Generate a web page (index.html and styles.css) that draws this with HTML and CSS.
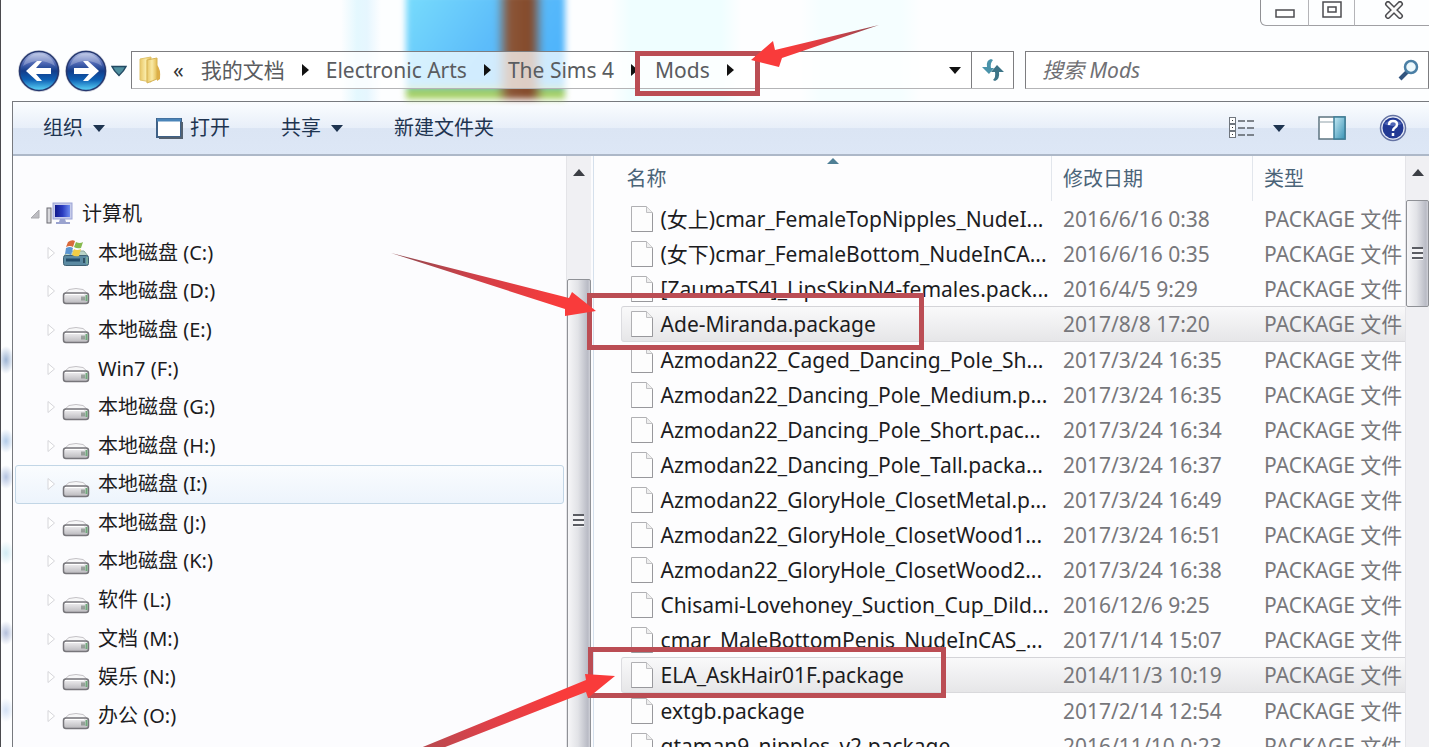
FILE: index.html
```html
<!DOCTYPE html>
<html lang="zh-CN">
<head>
    <meta charset="UTF-8">
    <meta name="viewport" content="width=device-width, initial-scale=1.0">
    <title>Mods</title>
    <link rel="stylesheet" href="styles.css">
</head>
<body>
    <!-- shared icons -->
    <svg class="sprite" width="0" height="0" aria-hidden="true">
        <defs>
            <linearGradient id="ballGrad" x1="0" y1="0" x2="0" y2="1">
                <stop offset="0" stop-color="#b9c4e6"/>
                <stop offset=".3" stop-color="#4f68b4"/>
                <stop offset=".5" stop-color="#123c8a"/>
                <stop offset=".72" stop-color="#0d5fb4"/>
                <stop offset="1" stop-color="#5fd8fa"/>
            </linearGradient>
            <linearGradient id="driveGrad" x1="0" y1="0" x2="0" y2="1">
                <stop offset="0" stop-color="#f4f3f5"/>
                <stop offset="1" stop-color="#b9b8bc"/>
            </linearGradient>
            <linearGradient id="paneGrad" x1="0" y1="0" x2="1" y2="1">
                <stop offset="0" stop-color="#c4e9f4"/>
                <stop offset="1" stop-color="#3a93b5"/>
            </linearGradient>
            <linearGradient id="folderGrad" x1="0" y1="0" x2="1" y2="0">
                <stop offset="0" stop-color="#e9c766"/>
                <stop offset=".5" stop-color="#f9eaa6"/>
                <stop offset="1" stop-color="#e3bb50"/>
            </linearGradient>
            <linearGradient id="screenGrad" x1="0" y1="0" x2="1" y2="0">
                <stop offset="0" stop-color="#121a8c"/>
                <stop offset=".5" stop-color="#2a3cc0"/>
                <stop offset="1" stop-color="#6d8bf0"/>
            </linearGradient>
        </defs>
        <symbol id="file" viewBox="0 0 22 28">
            <path d="M.5 1.5h15l6 6v19H.5z" fill="#fdfdfd" stroke="#b0b0b3"/>
            <path d="M15.500 1.500v6h6" fill="#eee" stroke="#c0c0c3"/>
            <path d="M.5 26.500h21v-18" fill="none" stroke="#98989c"/>
        </symbol>
        <symbol id="drive" viewBox="0 0 28 28">
            <path d="M2 17 7 12.500q7-2 14 0L26 17z" fill="#f7f7f8" stroke="#c4c2c6"/>
            <rect x="1.500" y="16" width="25" height="10.500" rx="2.500" fill="url(#driveGrad)" stroke="#77767b" stroke-width="1.500"/>
            <path d="M3 17.500h19" stroke="#fff"/>
            <path d="M20 19.500v4M22 19.500v4" stroke="#5d6a60"/>
            <path d="M24.500 18v6" stroke="#6fa87a" stroke-width="2"/>
        </symbol>
        <symbol id="sysdrive" viewBox="0 0 28 28">
            <path d="M2 17 6 12h16l4 5z" fill="#b9d3c8" stroke="#8aa79c"/>
            <rect x="1.500" y="16.500" width="25" height="10" rx="2" fill="#5b8aa2" stroke="#3f6173"/>
            <path d="M4 21h14" stroke="#234c69" stroke-width="3"/>
            <path d="M22 19v5" stroke="#2e5162" stroke-width="2"/>
            <path d="M25 18v7" stroke="#8fc79c"/>
            <path d="M6 3q4-3 7-1l-2 6Q8 6 4 8z" fill="#d9693c"/>
            <path d="M14 3q4 2 7 0l-2 6q-4 1-7-1z" fill="#86b94f"/>
            <path d="M4 9q4-2 7 0l-2 7q-4-2-6-1z" fill="#5b95d0"/>
            <path d="M12 10q3 2 7 0l-2 7q-4 1-7-1z" fill="#f1cd45"/>
        </symbol>
        <symbol id="closed" viewBox="0 0 9 14">
            <path d="M1 1.500 7.500 7 1 12.500z" fill="#fff" stroke="#d6d6da"/>
        </symbol>
        <symbol id="crumb" viewBox="0 0 7 12">
            <path d="M0 0 7 6 0 12z" fill="#111"/>
        </symbol>
        <symbol id="down" viewBox="0 0 12 7">
            <path d="M0 0h12L6 7z" fill="currentColor"/>
        </symbol>
        <symbol id="up" viewBox="0 0 12 7">
            <path d="M0 7h12L6 0z" fill="#3c3f45"/>
        </symbol>
    </svg>

    <div class="window">
        <header class="glass">
            <div class="backdrop"></div>
            <div class="titlebar">
                <button class="caption" aria-label="最小化">
                    <svg width="20" height="18"><rect x="1" y="9" width="18" height="7" fill="#fff" stroke="#4c4c50" stroke-width="1.500"/></svg>
                </button>
                <button class="caption" aria-label="最大化">
                    <svg width="20" height="18"><rect x="1" y="1" width="18" height="15" fill="#fff" stroke="#4c4c50" stroke-width="1.500"/><rect x="6" y="6" width="8" height="5" fill="#fff" stroke="#4c4c50" stroke-width="1.500"/></svg>
                </button>
                <button class="caption caption-close" aria-label="关闭">
                    <svg width="20" height="18"><g fill="none" stroke-linecap="round"><path d="m4 3 12 12M16 3 4 15" stroke="#4c4c50" stroke-width="6"/><path d="m4 3 12 12M16 3 4 15" stroke="#fafafa" stroke-width="3"/></g></svg>
                </button>
            </div>
            <div class="navbar">
                <div class="travel">
                    <button class="ball" aria-label="后退">
                        <svg width="44" height="44" viewBox="0 0 44 44"><circle cx="22" cy="22" r="21" fill="#d3d6df"/><circle cx="22" cy="22" r="19.500" fill="url(#ballGrad)" stroke="#26386f" stroke-width="1.500"/><path d="M6 17q16-10 32 0A16.500 16.500 0 0 0 6 17z" fill="#fff" opacity=".25"/><path d="M9 22 20 12h5l-6 7h15v6H19l6 7h-5z" fill="#fff"/></svg>
                    </button>
                    <button class="ball" aria-label="前进">
                        <svg width="44" height="44" viewBox="0 0 44 44"><circle cx="22" cy="22" r="21" fill="#d3d6df"/><circle cx="22" cy="22" r="19.500" fill="url(#ballGrad)" stroke="#26386f" stroke-width="1.500"/><path d="M6 17q16-10 32 0A16.500 16.500 0 0 0 6 17z" fill="#fff" opacity=".25"/><path d="M35 22 24 12h-5l6 7H10v6h15l-6 7h5z" fill="#fff"/></svg>
                    </button>
                    <button class="recent" aria-label="最近的页面">
                        <svg width="16" height="12"><path d="M1 1.500h14Q13 6 8 10.500 3 6 1 1.500z" fill="#4f8f9f" stroke="#234a63" stroke-width="1.500"/></svg>
                    </button>
                </div>
                <nav class="address">
                    <svg class="folder" width="24" height="28"><path d="M2 3 13 1v25L2 24z" fill="url(#folderGrad)" stroke="#e0c36c"/><path d="M9 4 19 2v21L9 27z" fill="url(#folderGrad)" stroke="#d6b457"/><path d="M19 9q4 4 3 14l-3 2z" fill="#dcae47"/></svg>
                    <a href="#" class="more">«</a>
                    <a href="#">我的文档</a>
                    <svg width="7" height="12"><use href="#crumb"/></svg>
                    <a href="#">Electronic Arts</a>
                    <svg width="7" height="12"><use href="#crumb"/></svg>
                    <a href="#">The Sims 4</a>
                    <svg width="7" height="12"><use href="#crumb"/></svg>
                    <a href="#">Mods</a>
                    <svg width="7" height="12"><use href="#crumb"/></svg>
                    <button class="history" aria-label="历史记录"><svg width="12" height="7"><use href="#down"/></svg></button>
                    <button class="refresh" aria-label="刷新">
                        <svg width="24" height="24"><path d="M10 1Q5 2 6 9H1l7 7 5-6H10q-1-5 2-8z" fill="#4a93aa"/><path d="M14 23q5-2 4-9h5l-7-7-6 7h4q1 5-2 8z" fill="#3d7487"/></svg>
                    </button>
                </nav>
                <form class="search">
                    <input type="text" placeholder="搜索 Mods" aria-label="搜索 Mods">
                    <button type="button" aria-label="搜索">
                        <svg width="22" height="22"><path d="m2 20 8-8" stroke="#33557f" stroke-width="4"/><circle cx="13" cy="8" r="6" fill="#eef9fd" stroke="#4a7fa5" stroke-width="2.500"/></svg>
                    </button>
                </form>
            </div>
        </header>

        <div class="client">
            <div class="toolbar">
                <button class="organize">组织 <svg width="12" height="7"><use href="#down"/></svg></button>
                <button class="open"><svg width="27" height="21"><rect x="1" y="1" width="24" height="18" fill="#fff" stroke="#3f6187" stroke-width="2"/><path d="M1 2h24" stroke="#4a84b8" stroke-width="3"/><path d="M3 20h23V4" fill="none" stroke="#54616f" stroke-width="2"/></svg>打开</button>
                <button class="share">共享 <svg width="12" height="7"><use href="#down"/></svg></button>
                <button>新建文件夹</button>
                <div class="tools">
                    <button class="views" aria-label="更改视图">
                        <svg width="26" height="22"><g fill="#fff" stroke="#70767e"><rect x=".5" y=".5" width="6" height="6"/><rect x=".5" y="7.500" width="6" height="6"/><rect x=".5" y="14.500" width="6" height="6"/></g><path d="M3 3.500h1M3 10.500h1M3 17.500h1" stroke="#333"/><path d="M9 4h7M18 4h7M9 11h7M18 11h7M9 18h7M18 18h7" stroke="#5b6168" stroke-width="1.500"/></svg>
                        <svg width="12" height="7"><use href="#down"/></svg>
                    </button>
                    <button aria-label="预览窗格">
                        <svg width="28" height="24"><rect x="1" y="1" width="26" height="22" fill="#fff" stroke="#5d7480" stroke-width="1.500"/><path d="M1 6h15" stroke="#8fa0a8"/><rect x="16" y="1" width="11" height="22" fill="url(#paneGrad)" stroke="#3d7f99" stroke-width="1.500"/></svg>
                    </button>
                    <button aria-label="帮助">
                        <svg width="28" height="28"><circle cx="14" cy="14" r="12.500" fill="#e9edf8" stroke="#6573a3" stroke-width="1.500"/><circle cx="14" cy="14" r="10.500" fill="#233a94"/><path d="M5 10q9-8 18 0-9 4-18 0z" fill="#6f86cf" opacity=".6"/><path d="M10 11q0-4 4-4t4 3.500q0 2-2.500 3.500Q14 15 14 17M14 19v3" fill="none" stroke="#fff" stroke-width="2.500"/></svg>
                    </button>
                </div>
            </div>

            <div class="panes">
                <aside class="sidebar">
                    <ul class="tree">
                        <li class="root"><svg width="10" height="10"><path d="M9 1v8H1z" fill="#bdbdc2" stroke="#a9a9ae"/></svg><svg width="28" height="28"><rect x="1" y="8" width="4" height="15" fill="#d8d8dc" stroke="#6b6b73"/><rect x="7" y="3" width="19" height="16" fill="#c6cbea" stroke="#9ba3d4"/><rect x="9" y="5" width="15" height="12" fill="url(#screenGrad)"/><path d="M14 19h5l1 3h4v2H10v-2h3z" fill="#9aa3cf"/></svg><a href="#">计算机</a></li>
                        <li><svg width="9" height="14"><use href="#closed"/></svg><svg width="28" height="28"><use href="#sysdrive"/></svg><a href="#">本地磁盘 (C:)</a></li>
                        <li><svg width="9" height="14"><use href="#closed"/></svg><svg width="28" height="28"><use href="#drive"/></svg><a href="#">本地磁盘 (D:)</a></li>
                        <li><svg width="9" height="14"><use href="#closed"/></svg><svg width="28" height="28"><use href="#drive"/></svg><a href="#">本地磁盘 (E:)</a></li>
                        <li><svg width="9" height="14"><use href="#closed"/></svg><svg width="28" height="28"><use href="#drive"/></svg><a href="#">Win7 (F:)</a></li>
                        <li><svg width="9" height="14"><use href="#closed"/></svg><svg width="28" height="28"><use href="#drive"/></svg><a href="#">本地磁盘 (G:)</a></li>
                        <li><svg width="9" height="14"><use href="#closed"/></svg><svg width="28" height="28"><use href="#drive"/></svg><a href="#">本地磁盘 (H:)</a></li>
                        <li class="hover"><svg width="9" height="14"><use href="#closed"/></svg><svg width="28" height="28"><use href="#drive"/></svg><a href="#">本地磁盘 (I:)</a></li>
                        <li><svg width="9" height="14"><use href="#closed"/></svg><svg width="28" height="28"><use href="#drive"/></svg><a href="#">本地磁盘 (J:)</a></li>
                        <li><svg width="9" height="14"><use href="#closed"/></svg><svg width="28" height="28"><use href="#drive"/></svg><a href="#">本地磁盘 (K:)</a></li>
                        <li><svg width="9" height="14"><use href="#closed"/></svg><svg width="28" height="28"><use href="#drive"/></svg><a href="#">软件 (L:)</a></li>
                        <li><svg width="9" height="14"><use href="#closed"/></svg><svg width="28" height="28"><use href="#drive"/></svg><a href="#">文档 (M:)</a></li>
                        <li><svg width="9" height="14"><use href="#closed"/></svg><svg width="28" height="28"><use href="#drive"/></svg><a href="#">娱乐 (N:)</a></li>
                        <li><svg width="9" height="14"><use href="#closed"/></svg><svg width="28" height="28"><use href="#drive"/></svg><a href="#">办公 (O:)</a></li>
                    </ul>
                    <div class="scrollbar tree-scroll">
                        <svg width="12" height="7"><use href="#up"/></svg>
                        <div class="thumb"><span class="grip"></span></div>
                    </div>
                </aside>

                <main class="files">
                    <table>
                        <colgroup><col><col class="col-date"><col class="col-type"></colgroup>
                        <thead>
                            <tr><th>名称<svg class="sort" width="12" height="6"><path d="M0 6 6 0l6 6z" fill="#4f7f95"/></svg></th><th>修改日期</th><th>类型</th></tr>
                        </thead>
                        <tbody>
                            <tr><td><svg width="22" height="28"><use href="#file"/></svg>(女上)cmar_FemaleTopNipples_NudeI...</td><td>2016/6/16 0:38</td><td>PACKAGE 文件</td></tr>
                            <tr><td><svg width="22" height="28"><use href="#file"/></svg>(女下)cmar_FemaleBottom_NudeInCA...</td><td>2016/6/16 0:35</td><td>PACKAGE 文件</td></tr>
                            <tr><td><svg width="22" height="28"><use href="#file"/></svg>[ZaumaTS4]_LipsSkinN4-females.pack...</td><td>2016/4/5 9:29</td><td>PACKAGE 文件</td></tr>
                            <tr class="selected"><td><svg width="22" height="28"><use href="#file"/></svg>Ade-Miranda.package</td><td>2017/8/8 17:20</td><td>PACKAGE 文件</td></tr>
                            <tr><td><svg width="22" height="28"><use href="#file"/></svg>Azmodan22_Caged_Dancing_Pole_Sh...</td><td>2017/3/24 16:35</td><td>PACKAGE 文件</td></tr>
                            <tr><td><svg width="22" height="28"><use href="#file"/></svg>Azmodan22_Dancing_Pole_Medium.p...</td><td>2017/3/24 16:35</td><td>PACKAGE 文件</td></tr>
                            <tr><td><svg width="22" height="28"><use href="#file"/></svg>Azmodan22_Dancing_Pole_Short.pac...</td><td>2017/3/24 16:34</td><td>PACKAGE 文件</td></tr>
                            <tr><td><svg width="22" height="28"><use href="#file"/></svg>Azmodan22_Dancing_Pole_Tall.packa...</td><td>2017/3/24 16:37</td><td>PACKAGE 文件</td></tr>
                            <tr><td><svg width="22" height="28"><use href="#file"/></svg>Azmodan22_GloryHole_ClosetMetal.p...</td><td>2017/3/24 16:49</td><td>PACKAGE 文件</td></tr>
                            <tr><td><svg width="22" height="28"><use href="#file"/></svg>Azmodan22_GloryHole_ClosetWood1...</td><td>2017/3/24 16:51</td><td>PACKAGE 文件</td></tr>
                            <tr><td><svg width="22" height="28"><use href="#file"/></svg>Azmodan22_GloryHole_ClosetWood2...</td><td>2017/3/24 16:38</td><td>PACKAGE 文件</td></tr>
                            <tr><td><svg width="22" height="28"><use href="#file"/></svg>Chisami-Lovehoney_Suction_Cup_Dild...</td><td>2016/12/6 9:25</td><td>PACKAGE 文件</td></tr>
                            <tr><td><svg width="22" height="28"><use href="#file"/></svg>cmar_MaleBottomPenis_NudeInCAS_...</td><td>2017/1/14 15:07</td><td>PACKAGE 文件</td></tr>
                            <tr class="selected"><td><svg width="22" height="28"><use href="#file"/></svg>ELA_AskHair01F.package</td><td>2014/11/3 10:19</td><td>PACKAGE 文件</td></tr>
                            <tr><td><svg width="22" height="28"><use href="#file"/></svg>extgb.package</td><td>2017/2/14 12:54</td><td>PACKAGE 文件</td></tr>
                            <tr><td><svg width="22" height="28"><use href="#file"/></svg>gtaman9_nipples_v2.package</td><td>2016/11/10 0:23</td><td>PACKAGE 文件</td></tr>
                        </tbody>
                    </table>
                    <div class="scrollbar file-scroll">
                        <svg width="12" height="7"><use href="#up"/></svg>
                        <div class="thumb"><span class="grip"></span></div>
                    </div>
                </main>
            </div>
        </div>
    </div>

    <!-- red marks drawn over the window -->
    <svg class="marks" width="1429" height="747" aria-hidden="true">
        <defs>
            <linearGradient id="m1" gradientUnits="userSpaceOnUse" x1="879" y1="25" x2="790" y2="55"><stop offset="0" stop-color="#8d4a50"/><stop offset=".5" stop-color="#d04048"/><stop offset="1" stop-color="#f93b3b"/></linearGradient>
            <linearGradient id="m2" gradientUnits="userSpaceOnUse" x1="391" y1="253" x2="560" y2="303"><stop offset="0" stop-color="#8d4a50"/><stop offset=".5" stop-color="#d04048"/><stop offset="1" stop-color="#f93b3b"/></linearGradient>
            <linearGradient id="m3" gradientUnits="userSpaceOnUse" x1="420" y1="750" x2="560" y2="690"><stop offset="0" stop-color="#b54a50"/><stop offset=".5" stop-color="#e04048"/><stop offset="1" stop-color="#f93b3b"/></linearGradient>
        </defs>
        <g fill="none" stroke="#bb4d54" stroke-width="5">
            <rect x="637.500" y="53.500" width="120" height="40"/>
            <rect x="589.500" y="295.500" width="332" height="52"/>
            <rect x="590.500" y="649.500" width="353" height="46"/>
        </g>
        <path d="M751 60 773 41l2 9L879 25 782 58l-3 9z" fill="url(#m1)"/>
        <path d="M596 311 572 292l-3 6L391 253l174 56 0 7z" fill="url(#m2)"/>
        <path d="M615 676 585 674l1 6-190 78 16 2 174-68 2 6z" fill="url(#m3)"/>
    </svg>
</body>
</html>
```
FILE: styles.css
```css
* {
    box-sizing: border-box;
}

body {
    margin: 0;
    font-family: "Noto Sans", "Noto Sans CJK SC", sans-serif;
    font-size: 20px;
    line-height: 28px;
    color: #1c1c1e;
    background: #fdfeff;
    overflow: hidden;
}

button {
    display: flex;
    align-items: center;
    padding: 0;
    border: none;
    background: none;
    font: inherit;
    color: inherit;
    cursor: pointer;
}

a {
    color: inherit;
    text-decoration: none;
}

svg {
    flex-shrink: 0;
}

.sprite {
    position: absolute;
}

.window {
    display: flex;
    flex-direction: column;
    height: 100vh;
    border-left: 1px solid #4a4a4e;
    /* desktop showing through the left frame */
    background:
        radial-gradient(ellipse 8px 14px at 5px 360px, #9fb6d6, transparent),
        radial-gradient(ellipse 8px 12px at 5px 441px, #b4cdea, transparent),
        radial-gradient(ellipse 8px 12px at 5px 477px, #b4c4e2, transparent),
        radial-gradient(ellipse 8px 12px at 5px 553px, #d2ecf4, transparent),
        radial-gradient(ellipse 8px 12px at 5px 633px, #b4c0dc, transparent),
        radial-gradient(ellipse 8px 12px at 5px 710px, #d4e2f6, transparent),
        #fdfeff;
}

/* ---------- title + address ---------- */

.glass {
    position: relative;
    height: 101px;
    background: linear-gradient(to right, transparent 340px, #e4f8fe 356px, #e6f6fe 366px, transparent 380px,
        transparent 610px, #effeff 630px, #effeff 720px, transparent 740px,
        transparent 800px, #f5feff 820px, #f5feff 900px, transparent 920px);
}

.backdrop {
    position: absolute;
    top: -6px;
    left: 405px;
    width: 159px;
    height: 105px;
    filter: blur(3px);
    background:
        linear-gradient(to right, transparent 90px, #8b5638 103px, #84492a 125px, transparent 138px),
        linear-gradient(to bottom, transparent 90px, #a4cf62 97px),
        linear-gradient(125deg, #78dcfc, #5cbcfa 50%, #48b0fc);
}

.titlebar {
    position: relative;
    display: flex;
    justify-content: flex-end;
    height: 26px;
}

.caption {
    align-items: flex-start;
    justify-content: center;
    width: 46px;
    padding-top: 1px;
    border-left: 1px solid #b4b4b8;
    border-bottom: 1px solid #a0a0a4;
}

.caption:first-child {
    width: 48px;
    border-left-color: #909094;
    border-bottom-left-radius: 6px;
}

.caption-close {
    width: 75px;
    padding-left: 4px;
}

.navbar {
    position: relative;
    display: flex;
    align-items: center;
    height: 75px;
    padding-top: 13px;
    font-size: 21px;
}

.travel {
    display: flex;
    align-items: center;
    gap: 3px;
    padding: 2px 4px 0 16px;
}

.address {
    display: flex;
    align-items: center;
    flex: 1;
    gap: 17px;
    height: 38px;
    padding-left: 6px;
    border: 1px solid #7d7d80;
    border-bottom-color: #b4b4b6;
    background: rgba(255, 255, 255, 0.72);
    color: #5a5c60;
    white-space: nowrap;
}

.folder {
    margin-right: -6px;
}

.more {
    color: #333;
}

.history {
    margin-left: auto;
    margin-right: -7px;
    color: #111;
}

.refresh {
    justify-content: center;
    width: 42px;
    height: 100%;
    border-left: 1px solid #7d7d80;
}

.search {
    display: flex;
    align-items: center;
    width: 404px;
    height: 38px;
    margin-left: 11px;
    padding: 0 8px 0 16px;
    border: 1px solid #7d7d80;
    border-bottom-color: #b4b4b6;
    background: #fff;
}

.search input {
    flex: 1;
    min-width: 0;
    padding: 0;
    border: none;
    outline: none;
    background: none;
    font: inherit;
}

.search input::placeholder {
    color: #707074;
    font-style: italic;
    opacity: 1;
}

/* ---------- toolbar ---------- */

.client {
    display: flex;
    flex-direction: column;
    flex: 1;
    min-height: 0;
    margin-left: 11px;
    border-left: 1px solid #77797e;
    border-top: 1px solid #77797e;
}

.toolbar {
    display: flex;
    align-items: center;
    flex-shrink: 0;
    height: 54px;
    padding: 0 22px 0 30px;
    border-bottom: 2px solid #adb8c8;
    background: linear-gradient(#fbfdff, #e8eff9 49%, #dbe5f4 51%, #dde7f6);
    color: #1e3450;
}

.organize,
.share {
    gap: 10px;
    margin-right: 51px;
}

.open {
    gap: 7px;
    margin-right: 51px;
}

.tools {
    display: flex;
    align-items: center;
    gap: 33px;
    margin-left: auto;
}

.views {
    gap: 18px;
}

/* ---------- folder tree ---------- */

.panes {
    display: flex;
    flex: 1;
    min-height: 0;
}

.sidebar {
    display: flex;
    width: 41%;
    padding-right: 2px;
    border-right: 1px solid #d5e0ec;
    background: #fcfcfe;
}

.tree {
    display: flex;
    flex-direction: column;
    flex: 1;
    margin: 0;
    padding: 39px 2px 12px;
    list-style: none;
}

.tree li {
    display: flex;
    align-items: center;
    flex: 1;
    min-height: 0;
    padding-left: 31px;
    border: 1px solid transparent;
    border-radius: 3px;
}

.tree a {
    margin-left: 8px;
}

.tree svg + svg {
    margin-left: 6px;
}

.tree .root {
    padding-left: 14px;
}

.tree .hover {
    border-color: #c2d6e6;
    background: linear-gradient(#fafcfe, #edf4fc);
}

.scrollbar {
    display: flex;
    flex-direction: column;
    align-items: center;
    flex-shrink: 0;
    padding-top: 13px;
    border-left: 1px solid #e4e4e8;
    background: #f0f0f3;
    overflow: hidden;
}

.tree-scroll {
    width: 25px;
}

.thumb {
    display: flex;
    align-items: center;
    justify-content: center;
    flex-shrink: 0;
    width: 100%;
    border: 1px solid #8f9196;
    border-radius: 2px;
    background: linear-gradient(to right, #f6f6f8, #e2e3e7 45%, #b9bbc5 90%, #d0d1d8);
}

.tree-scroll .thumb {
    height: 482px;
    margin-top: 103px;
}

.grip {
    width: 11px;
    height: 13px;
    background: repeating-linear-gradient(#5b5d63 0 2px, #f4f4f6 2px 5px);
}

/* ---------- file list ---------- */

.files {
    display: flex;
    align-items: stretch;
    justify-content: space-between;
    flex: 1;
    min-width: 0;
    padding-left: 27px;
    background: #fdfdfe;
    overflow: hidden;
}

table {
    flex: 1;
    align-self: flex-start;
    width: 100%;
    border-collapse: separate;
    border-spacing: 0;
    table-layout: fixed;
}

.col-date {
    width: 201px;
}

.col-type {
    width: 153px;
}

th {
    position: relative;
    height: 45px;
    padding: 0 0 0 11px;
    border-left: 1px solid #e2e6ec;
    font-weight: normal;
    text-align: left;
    color: #4b6478;
}

th:first-child {
    padding-left: 5px;
    border-left-color: transparent;
}

.sort {
    position: absolute;
    top: 2px;
    left: 50%;
    margin-left: -9px;
}

td {
    height: 35px;
    padding: 0 0 0 12px;
    font-size: 21px;
    line-height: 28px;
    color: #77777b;
    white-space: nowrap;
}

td:first-child {
    padding-left: 10px;
    color: #1c1c1e;
}

td svg {
    margin-right: 8px;
    vertical-align: top;
}

.selected td {
    height: 36px;
    border-top: 1px solid #d4d4d8;
    border-bottom: 1px solid #d9d9dc;
    background: linear-gradient(#f9f9fa, #e6e6e8);
}

.selected td:first-child {
    border-left: 1px solid #dcdce0;
    border-radius: 3px 0 0 3px;
    padding-left: 9px;
}

.file-scroll {
    width: 24px;
}

.file-scroll .thumb {
    height: 107px;
    margin-top: 24px;
}

.marks {
    position: absolute;
    top: 0;
    left: 0;
    pointer-events: none;
}
```
